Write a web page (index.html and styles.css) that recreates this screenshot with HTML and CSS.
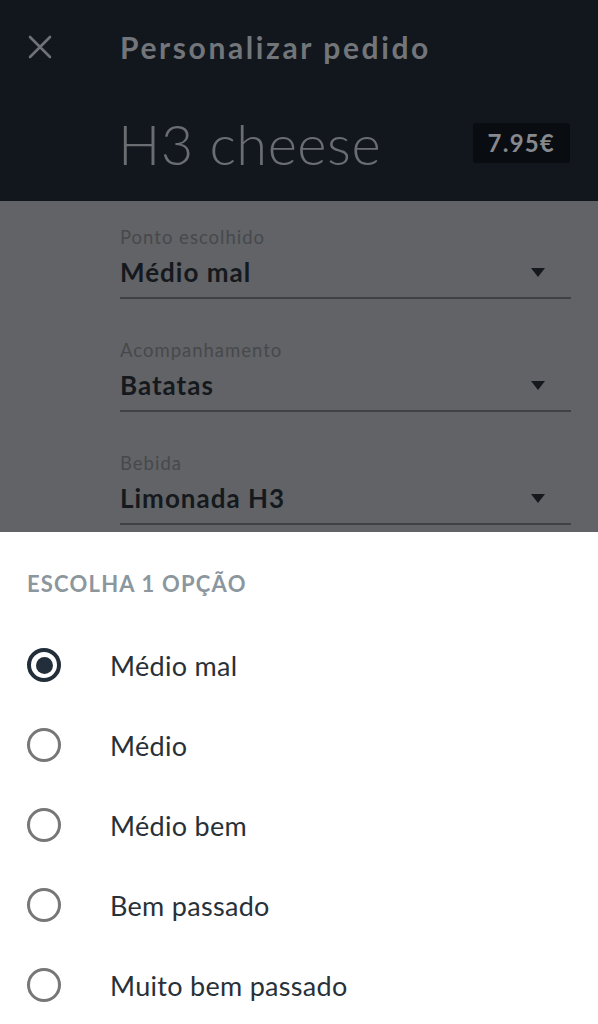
FILE: index.html
```html
<!DOCTYPE html>
<html lang="pt">
<head>
<meta charset="utf-8">
<title>Personalizar pedido</title>
<link rel="stylesheet" href="styles.css">
</head>
<body>
<div class="screen">
  <header class="header">
    <div class="topbar">
      <span class="close" aria-label="Fechar">
        <svg width="24" height="24" viewBox="0 0 24 24"><path d="M2 2 L22 22 M22 2 L2 22" stroke="#6f7378" stroke-width="2.6" fill="none" stroke-linecap="round"/></svg>
      </span>
      <h1 class="title">Personalizar pedido</h1>
    </div>
    <div class="product">
      <span class="product-name">H3 cheese</span>
      <span class="price">7.95€</span>
    </div>
  </header>

  <section class="form">
    <div class="field">
      <div class="field-label">Ponto escolhido</div>
      <div class="field-value"><span>Médio mal</span><span class="caret"></span></div>
    </div>
    <div class="field">
      <div class="field-label">Acompanhamento</div>
      <div class="field-value"><span>Batatas</span><span class="caret"></span></div>
    </div>
    <div class="field">
      <div class="field-label">Bebida</div>
      <div class="field-value"><span>Limonada H3</span><span class="caret"></span></div>
    </div>
  </section>

  <section class="sheet">
    <div class="sheet-title">ESCOLHA 1 OPÇÃO</div>
    <ul class="options">
      <li class="option selected"><span class="radio"></span><span class="option-text">Médio mal</span></li>
      <li class="option"><span class="radio"></span><span class="option-text">Médio</span></li>
      <li class="option"><span class="radio"></span><span class="option-text">Médio bem</span></li>
      <li class="option"><span class="radio"></span><span class="option-text">Bem passado</span></li>
      <li class="option"><span class="radio"></span><span class="option-text">Muito bem passado</span></li>
    </ul>
  </section>
</div>
</body>
</html>
```

FILE: styles.css
```css
* { box-sizing: border-box; }
html, body { margin: 0; padding: 0; }
body {
  font-family: "Lato", "Open Sans", sans-serif;
  background: #616366;
}
.screen {
  position: relative;
  width: 598px;
  height: 1024px;
  overflow: hidden;
  background: #616366;
}
.header {
  background: #12171d;
  height: 201px;
}
.topbar {
  display: flex;
  align-items: center;
  height: 94px;
  padding-left: 28px;
}
.close {
  display: flex;
  width: 24px;
  height: 24px;
}
.title {
  margin: 0 0 0 68px;
  font-size: 30px;
  font-weight: 700;
  color: #72767a;
  letter-spacing: 2.6px;
}
.product {
  display: flex;
  align-items: center;
  justify-content: space-between;
  padding: 0 28px 8px 118px;
  height: 106px;
}
.product-name {
  font-size: 56px;
  font-weight: 300;
  color: #6a6e72;
  letter-spacing: 0.5px;
}
.price {
  background: #090c10;
  color: #86898d;
  font-size: 24px;
  font-weight: 700;
  line-height: 28px;
  padding: 6px 15px;
  border-radius: 3px;
  letter-spacing: 1.2px;
}
.form {
  padding: 24px 27px 0 120px;
}
.field {
  margin-bottom: 39px;
}
.field-label {
  font-size: 18.5px;
  color: #46494c;
  line-height: 24px;
  letter-spacing: 1px;
}
.field-value {
  display: flex;
  align-items: center;
  justify-content: space-between;
  margin-top: 4px;
  font-size: 26px;
  font-weight: 700;
  color: #15191d;
  line-height: 38px;
  letter-spacing: 1px;
  padding-bottom: 6px;
  border-bottom: 2px solid #3f4245;
}
.caret {
  width: 0;
  height: 0;
  border-left: 7.5px solid transparent;
  border-right: 7.5px solid transparent;
  border-top: 9px solid #15191d;
  margin-right: 26px;
}
.sheet {
  position: absolute;
  left: 0;
  right: 0;
  top: 532px;
  bottom: 0;
  background: #ffffff;
  padding: 36px 0 0 27px;
}
.sheet-title {
  font-size: 22px;
  font-weight: 700;
  color: #8b969d;
  letter-spacing: 1.2px;
  line-height: 32px;
}
.options {
  list-style: none;
  margin: 25px 0 0 0;
  padding: 0;
}
.option {
  display: flex;
  align-items: center;
  height: 80px;
}
.radio {
  width: 34px;
  height: 34px;
  border: 3px solid #777777;
  border-radius: 50%;
  flex: none;
  display: flex;
  align-items: center;
  justify-content: center;
}
.option.selected .radio {
  border: 4px solid #222e39;
}
.option.selected .radio::after {
  content: "";
  width: 17px;
  height: 17px;
  border-radius: 50%;
  background: #222e39;
}
.option-text {
  margin-left: 49px;
  font-size: 27px;
  color: #283038;
  letter-spacing: 0.3px;
}
```
